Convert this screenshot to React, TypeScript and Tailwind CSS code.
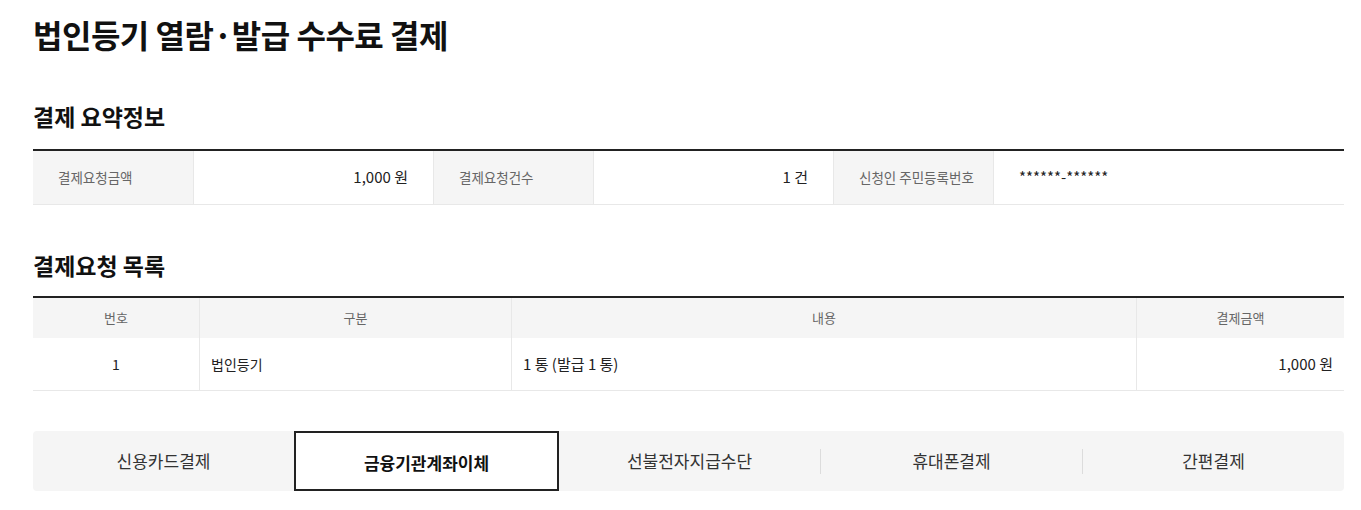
import React from 'react';

const SUMMARY = [
  { label: '결제요청금액', value: '1,000 원', align: 'right', width: 'w-[240px]' },
  { label: '결제요청건수', value: '1 건', align: 'right', width: 'w-[240px]' },
  { label: '신청인 주민등록번호', value: '******-******', align: 'left', width: 'flex-1' },
];

const TABS = ['신용카드결제', '금융기관계좌이체', '선불전자지급수단', '휴대폰결제', '간편결제'];
const ACTIVE = 1;

export default function App() {
  return (
    <div
      className="min-h-[510px] bg-white pl-[33px] pr-[17px] text-[#222]"
      style={{ fontFamily: '"Noto Sans CJK KR", "Noto Sans", sans-serif' }}
    >
      <h1 className="mt-[14px] h-[40px] text-[32px] leading-[40px] font-bold tracking-[-0.5px] text-[#111]">
        법인등기 열람·발급 수수료 결제
      </h1>

      {/* 결제 요약정보 */}
      <h2 className="mt-[47px] h-[30px] text-[23px] leading-[30px] font-bold text-[#111]">
        결제 요약정보
      </h2>
      <div className="mt-[18px] flex border-t-2 border-b border-t-[#222] border-b-[#e8e8e8]">
        {SUMMARY.map((s, i) => (
          <React.Fragment key={s.label}>
            <div
              className={
                'flex h-[53px] w-[160px] items-center bg-[#f5f5f5] pl-[25px] text-[13.5px] text-[#666]' +
                (i > 0 ? ' border-l border-[#e8e8e8]' : '')
              }
            >
              {s.label}
            </div>
            <div
              className={
                'flex h-[53px] items-center border-l border-[#e8e8e8] px-[25px] text-[15px] text-[#222] ' +
                s.width +
                (s.align === 'right' ? ' justify-end' : ' justify-start')
              }
            >
              {s.value}
            </div>
          </React.Fragment>
        ))}
      </div>

      {/* 결제요청 목록 */}
      <h2 className="mt-[45px] h-[30px] text-[23px] leading-[30px] font-bold text-[#111]">
        결제요청 목록
      </h2>
      <div className="mt-[16px] border-t-2 border-b border-t-[#222] border-b-[#e8e8e8]">
        <div className="grid h-[40px] grid-cols-[166px_312px_625px_1fr] bg-[#f5f5f5] text-[13px] text-[#666]">
          <div className="flex items-center justify-center">번호</div>
          <div className="flex items-center justify-center border-l border-[#e8e8e8]">구분</div>
          <div className="flex items-center justify-center border-l border-[#e8e8e8]">내용</div>
          <div className="flex items-center justify-center border-l border-[#e8e8e8]">결제금액</div>
        </div>
        <div className="grid h-[52px] grid-cols-[166px_312px_625px_1fr] text-[14px] text-[#222]">
          <div className="flex items-center justify-center">1</div>
          <div className="flex items-center border-l border-[#e8e8e8] pl-[11px]">법인등기</div>
          <div className="flex items-center border-l border-[#e8e8e8] pl-[11px] text-[15px]">1 통 (발급 1 통)</div>
          <div className="flex items-center justify-end border-l border-[#e8e8e8] pr-[11px] text-[15px]">1,000 원</div>
        </div>
      </div>

      {/* 결제수단 탭 */}
      <div className="mt-[40px] flex h-[60px] items-stretch rounded-[4px] bg-[#f5f5f5]">
        {TABS.map((t, i) => {
          const active = i === ACTIVE;
          const showDivider = i > 0 && i !== ACTIVE && i - 1 !== ACTIVE;
          return (
            <React.Fragment key={t}>
              {showDivider && <span className="my-auto h-[25px] w-px shrink-0 bg-[#dcdcdc]" />}
              <button
                className={
                  'flex flex-1 items-center justify-center text-[17px] ' +
                  (active
                    ? 'border-2 border-[#222] bg-white pt-[4px] font-bold text-[#111]'
                    : 'text-[#333]')
                }
              >
                {t}
              </button>
            </React.Fragment>
          );
        })}
      </div>
    </div>
  );
}
